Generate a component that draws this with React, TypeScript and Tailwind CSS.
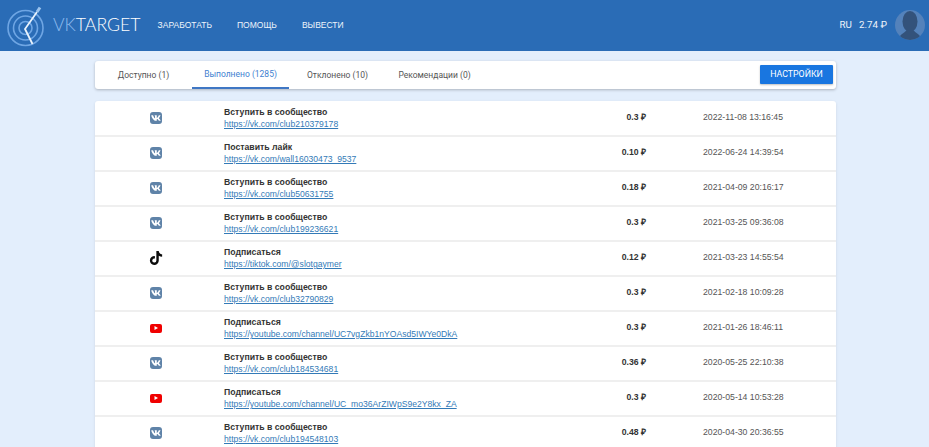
import { FaVk, FaTiktok } from 'react-icons/fa'

type Row = { kind: 'vk' | 'tt' | 'yt'; title: string; url: string; price: string; date: string }

const rows: Row[] = [
  { kind: 'vk', title: 'Вступить в сообщество', url: 'https://vk.com/club210379178', price: '0.3', date: '2022-11-08 13:16:45' },
  { kind: 'vk', title: 'Поставить лайк', url: 'https://vk.com/wall16030473_9537', price: '0.10', date: '2022-06-24 14:39:54' },
  { kind: 'vk', title: 'Вступить в сообщество', url: 'https://vk.com/club50631755', price: '0.18', date: '2021-04-09 20:16:17' },
  { kind: 'vk', title: 'Вступить в сообщество', url: 'https://vk.com/club199236621', price: '0.3', date: '2021-03-25 09:36:08' },
  { kind: 'tt', title: 'Подписаться', url: 'https://tiktok.com/@slotgaymer', price: '0.12', date: '2021-03-23 14:55:54' },
  { kind: 'vk', title: 'Вступить в сообщество', url: 'https://vk.com/club32790829', price: '0.3', date: '2021-02-18 10:09:28' },
  { kind: 'yt', title: 'Подписаться', url: 'https://youtube.com/channel/UC7vgZkb1nYOAsd5IWYe0DkA', price: '0.3', date: '2021-01-26 18:46:11' },
  { kind: 'vk', title: 'Вступить в сообщество', url: 'https://vk.com/club184534681', price: '0.36', date: '2020-05-25 22:10:38' },
  { kind: 'yt', title: 'Подписаться', url: 'https://youtube.com/channel/UC_mo36ArZIWpS9e2Y8kx_ZA', price: '0.3', date: '2020-05-14 10:53:28' },
  { kind: 'vk', title: 'Вступить в сообщество', url: 'https://vk.com/club194548103', price: '0.48', date: '2020-04-30 20:36:55' },
]

function Logo() {
  return (
    <svg width="40" height="46" viewBox="0 0 40 46" fill="none" className="shrink-0">
      <circle cx="18.5" cy="25" r="17.5" stroke="#6fa6e4" strokeWidth="1.6" />
      <circle cx="18.5" cy="25" r="12" stroke="#6fa6e4" strokeWidth="1.6" />
      <circle cx="18.5" cy="25" r="6.5" stroke="#6fa6e4" strokeWidth="1.6" />
      <path d="M30 9 L18 26 L25.5 41" stroke="#eaf3fc" strokeWidth="1.8" />
      <path d="M30 9 L33 4.5" stroke="#9cc4ee" strokeWidth="3" />
    </svg>
  )
}

function Avatar() {
  return (
    <div className="w-[30px] h-[30px] rounded-full bg-[#5482bb] overflow-hidden">
      <svg viewBox="0 0 30 30" width="30" height="30">
        <ellipse cx="15" cy="11.5" rx="7.5" ry="10.5" fill="#33527b" />
        <path d="M3 30 C4 25 9 23 12 20 L18 20 C21 23 26 25 27 30 Z" fill="#33527b" />
      </svg>
    </div>
  )
}

function TaskIcon({ kind }: { kind: Row['kind'] }) {
  if (kind === 'tt') return <FaTiktok className="text-[14px] text-[#0c0c0c]" />
  if (kind === 'yt')
    return (
      <div className="w-[12px] h-[9px] rounded-[2px] bg-[#f00000] flex items-center justify-center">
        <svg width="4" height="4" viewBox="0 0 4 4">
          <path d="M0.5 0 L4 2 L0.5 4 Z" fill="#fff" />
        </svg>
      </div>
    )
  return (
    <div className="w-3 h-3 rounded-[3px] bg-[#5f83a8] flex items-center justify-center">
      <FaVk className="text-[10px] text-white" />
    </div>
  )
}

export default function App() {
  return (
    <div className="h-[447px] overflow-hidden bg-[#e3eefc] font-['Roboto',sans-serif]">
      <header className="h-[51px] bg-[#2a6cb6] flex items-center pl-[7px] pr-[4px]">
        <Logo />
        <div className="ml-[6px] text-[17.7px] font-light font-['Lato',sans-serif] text-white">
          <span className="text-[#8dbbee]">VK</span>TARGET
        </div>
        <nav className="flex gap-[25px] ml-[17px] text-[8.5px] text-[#eef4fb] font-['Liberation_Sans',sans-serif]">
          <span>ЗАРАБОТАТЬ</span>
          <span>ПОМОЩЬ</span>
          <span>ВЫВЕСТИ</span>
        </nav>
        <div className="ml-auto flex items-center text-[9.8px] text-[#eef4fb]">
          <span>RU</span>
          <span className="ml-[7px]">2.74 ₽</span>
          <div className="ml-[8px] pb-[1px]">
            <Avatar />
          </div>
        </div>
      </header>

      <main className="w-[741px] ml-[95px]">
        <div className="mt-[10px] h-[28px] bg-white rounded-[3px] shadow-[0_1px_3px_rgba(0,0,0,0.25)] flex items-stretch text-[8.5px] text-[#555]">
          <div className="w-[97px] flex items-center justify-center">Доступно (1)</div>
          <div className="w-[97px] flex items-center justify-center text-[#3f7fd0] border-b-2 border-[#3f77c4]">Выполнено (1285)</div>
          <div className="w-[97px] flex items-center justify-center">Отклонено (10)</div>
          <div className="w-[97px] flex items-center justify-center">Рекомендации (0)</div>
          <div className="ml-auto flex items-center pr-[3px] pb-[1px]">
            <button className="w-[73px] h-[19px] bg-[#1976e0] rounded-[1px] text-white text-[8.8px] shadow-[0_1px_2px_rgba(0,0,0,0.25)]">НАСТРОЙКИ</button>
          </div>
        </div>

        <div className="mt-[12px] pt-[1px] bg-white rounded-[3px] shadow-[0_1px_3px_rgba(0,0,0,0.1)] font-['Liberation_Sans',sans-serif]">
          {rows.map((row) => (
            <div key={row.url} className="h-[35px] pb-[1px] grid grid-cols-[122px_351px_78px_1fr] items-center border-b-2 border-[#efefef]">
              <div className="flex justify-center">
                <TaskIcon kind={row.kind} />
              </div>
              <div className="pl-[7px] leading-[12px]">
                <div className="text-[8.7px] font-bold text-[#333]">{row.title}</div>
                <a className="block text-[8.6px] text-[#337ab7] underline">{row.url}</a>
              </div>
              <div className="text-right text-[8.7px] font-bold text-[#333]">{row.price} ₽</div>
              <div className="pl-[57px] text-[8.7px] text-[#555]">{row.date}</div>
            </div>
          ))}
        </div>
      </main>
    </div>
  )
}
